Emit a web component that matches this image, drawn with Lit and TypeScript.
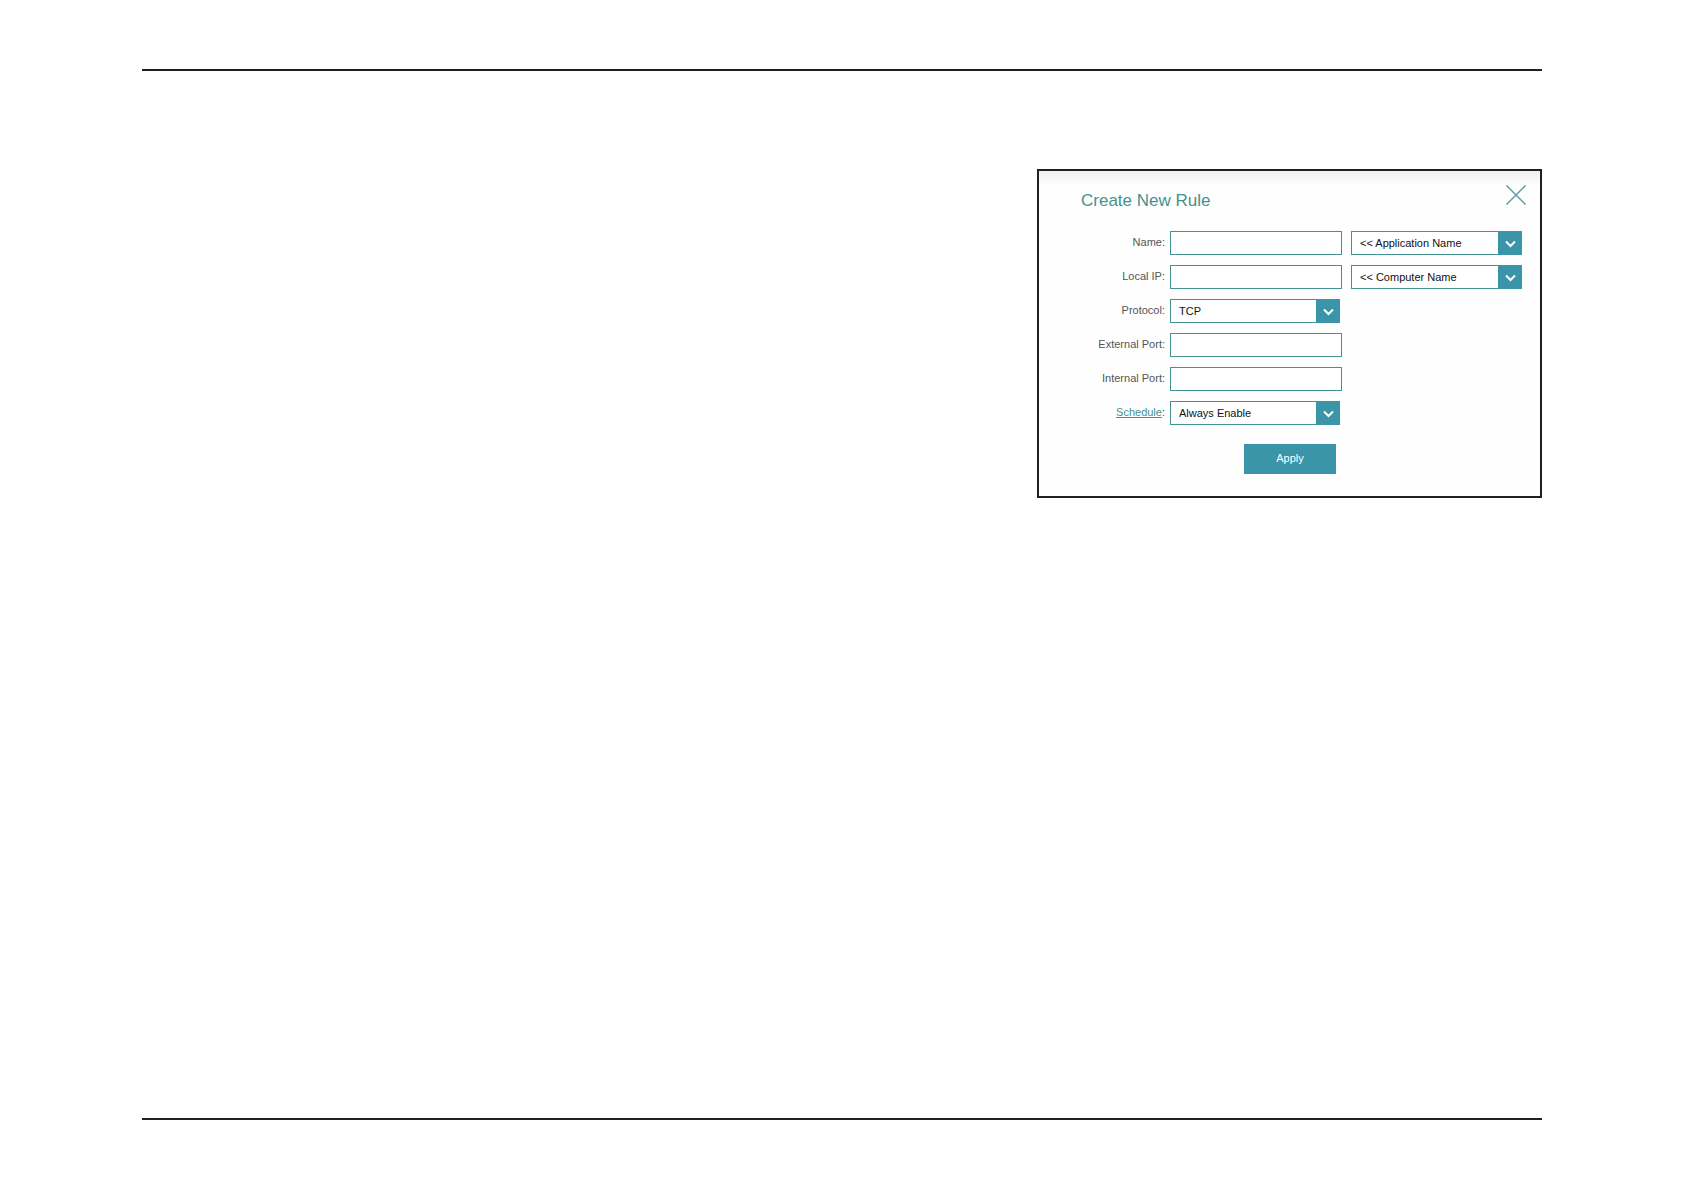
import { LitElement, html, css, svg } from "lit";
import { customElement } from "lit/decorators.js";

const chevron = svg`<svg class="chevron" viewBox="0 0 24 24" aria-hidden="true"><path d="M8 10.500l4.500 4.500 4.500-4.500" /></svg>`;

@customElement("app-root")
export class AppRoot extends LitElement {
  static styles = css`
    :host {
      display: block;
      background: #fff;
      font-family: "Liberation Sans", Arial, sans-serif;
      font-size: 11px;
      color: #111;
    }
    .page {
      box-sizing: border-box;
      min-height: 100vh;
      padding: 69px 142px 70px;
      display: flex;
      flex-direction: column;
    }
    .content {
      flex: 1;
      border-top: 2px solid #231f20;
      border-bottom: 2px solid #231f20;
      padding: 98px 0;
      display: flex;
      justify-content: flex-end;
      align-items: flex-start;
    }
    .panel {
      box-sizing: border-box;
      width: 36%;
      min-width: 505px;
      border: 2px solid #231f20;
      padding: 0 18px 22px 0;
      background: linear-gradient(#efefef, #fefefe 14px);
    }
    .head {
      display: flex;
      justify-content: space-between;
      padding: 12px 0 0 42px;
      height: 48px;
    }
    .title {
      margin: 0;
      padding-top: 8px;
      font-size: 17px;
      line-height: 20px;
      font-weight: 400;
      color: #43928f;
    }
    .close {
      width: 24px;
      height: 24px;
      margin-right: -6px;
      padding: 0;
      border: 0;
      background: none;
    }
    .close svg {
      display: block;
      width: 24px;
      height: 24px;
      fill: none;
      stroke: #5f9f9f;
      stroke-width: 1.5;
    }
    .rows {
      display: grid;
      gap: 10px;
    }
    .row {
      display: grid;
      grid-template-columns: 1fr 172px 180px;
      align-items: center;
    }
    .label {
      padding: 0 5px 2px 0;
      text-align: right;
      color: #555;
    }
    .link {
      color: #43928f;
    }
    .input,
    .select {
      box-sizing: border-box;
      width: 100%;
      height: 24px;
      margin: 0;
      border: 1px solid #43928f;
      border-radius: 0;
      background: #fff;
      font: inherit;
      color: inherit;
      padding: 0 8px;
    }
    .select {
      appearance: none;
      grid-area: 1 / 1 / 2 / 3;
    }
    .drop {
      display: grid;
      grid-template-columns: 1fr 24px;
      margin-right: 2px;
    }
    .drop.side {
      margin: 0 0 0 9px;
    }
    .chevron {
      grid-area: 1 / 2;
      width: 24px;
      height: 24px;
      background: #3b95a8;
      fill: none;
      stroke: #fff;
      stroke-width: 2;
      pointer-events: none;
      z-index: 1;
    }
    .apply {
      display: block;
      width: 92px;
      height: 30px;
      margin: 19px 0 0 auto;
      padding: 0 0 2px;
      border: 0;
      background: #3b95a8;
      color: #fff;
      font: inherit;
    }
    .actions {
      padding-right: 186px;
    }
  `;

  private select(id: string, option: string, side = false) {
    return html`<div class="drop ${side ? "side" : ""}">
      <select class="select" id=${id} aria-label=${option}>
        <option>${option}</option>
      </select>
      ${chevron}
    </div>`;
  }

  private label(id: string, text: string) {
    return html`<label class="label" for=${id}>${text}</label>`;
  }

  private text(id: string) {
    return html`<input class="input" type="text" id=${id} />`;
  }

  render() {
    return html`<main class="page">
      <div class="content">
        <section class="panel">
          <header class="head">
            <h1 class="title">Create New Rule</h1>
            <button class="close" type="button" aria-label="Close">
              <svg viewBox="0 0 24 24"><path d="M2.500 2.500l19 19M21.500 2.500l-19 19" /></svg>
            </button>
          </header>
          <form>
            <div class="rows">
              <div class="row">
                ${this.label("name", "Name:")} ${this.text("name")}
                ${this.select("application", "<< Application Name", true)}
              </div>
              <div class="row">
                ${this.label("ip", "Local IP:")} ${this.text("ip")}
                ${this.select("computer", "<< Computer Name", true)}
              </div>
              <div class="row">
                ${this.label("protocol", "Protocol:")} ${this.select("protocol", "TCP")}
              </div>
              <div class="row">${this.label("external", "External Port:")} ${this.text("external")}</div>
              <div class="row">${this.label("internal", "Internal Port:")} ${this.text("internal")}</div>
              <div class="row">
                <label class="label" for="schedule"><a class="link" href="#schedule">Schedule</a>:</label>
                ${this.select("schedule", "Always Enable")}
              </div>
            </div>
            <div class="actions"><button class="apply" type="button">Apply</button></div>
          </form>
        </section>
      </div>
    </main>`;
  }
}
